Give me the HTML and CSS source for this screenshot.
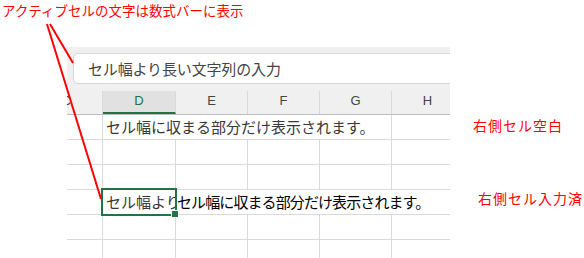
FILE: index.html
```html
<!DOCTYPE html>
<html lang="ja">
<head>
  <meta charset="UTF-8" />
  <meta name="viewport" content="width=device-width, initial-scale=1" />
  <title>セルの文字表示</title>
  <link rel="stylesheet" href="styles.css">
</head>
<body>

  <svg class="callout" width="584" height="258" viewBox="0 0 584 258">
    <line x1="50" y1="24" x2="73" y2="63" />
    <line x1="47" y1="24" x2="101" y2="199" />
  </svg>

  <p class="caption">アクティブセルの文字は数式バーに表示</p>

  <div class="main">
    <div class="sheet">
      <div class="formula-area">
        <div class="formula-box">セル幅より長い文字列の入力</div>
      </div>

      <div class="col-heads">
        <div class="head">C</div>
        <div class="head is-active">D</div>
        <div class="head">E</div>
        <div class="head">F</div>
        <div class="head">G</div>
        <div class="head">H</div>
      </div>

      <div class="rows">
        <!-- row 1: right cells empty, text spills over -->
        <div class="cell"></div>
        <div class="cell span-4">セル幅に収まる部分だけ表示されます。</div>
        <div class="cell"></div>

        <div class="cell"></div><div class="cell"></div><div class="cell"></div>
        <div class="cell"></div><div class="cell"></div><div class="cell"></div>

        <div class="cell"></div><div class="cell"></div><div class="cell"></div>
        <div class="cell"></div><div class="cell"></div><div class="cell"></div>

        <!-- row 4: right cell filled, text clipped -->
        <div class="cell"></div>
        <div class="cell selected"><span class="clip">セル幅より長い文字列の入力</span></div>
        <div class="cell span-rest dark">セル幅に収まる部分だけ表示されます。</div>

        <div class="cell"></div><div class="cell"></div><div class="cell"></div>
        <div class="cell"></div><div class="cell"></div><div class="cell"></div>

        <div class="cell"></div><div class="cell"></div><div class="cell"></div>
        <div class="cell"></div><div class="cell"></div><div class="cell"></div>
      </div>
    </div>

    <div class="notes">
      <p class="note note-empty">右側セル空白</p>
      <p class="note note-filled">右側セル入力済</p>
    </div>
  </div>

</body>
</html>
```

FILE: styles.css
```css
body {
  margin: 0;
  width: 584px;
  height: 258px;
  overflow: hidden;
  position: relative;
  background: #fff;
  font-family: "Noto Sans CJK JP", "Noto Sans", sans-serif;
}
.callout {
  position: absolute;
  left: 0;
  top: 0;
  z-index: 2;
  pointer-events: none;
}
.callout line {
  stroke: #ff0000;
  stroke-width: 2;
}
.caption {
  margin: 0;
  height: 47px;
  padding-left: 2px;
  line-height: 20px;
  font-size: 13.5px;
  color: #ff0000;
}
.main {
  display: flex;
  align-items: flex-start;
}
.sheet {
  margin-left: 67px;
  width: 383px;
  height: 211px;
  overflow: hidden;
}
.formula-area {
  background: #f0f0f0;
  padding: 6px 0 0 6px;
}
.formula-box {
  height: 29px;
  margin-right: -20px;
  padding-left: 14px;
  background: #fff;
  border: 1px solid #d6d6d6;
  border-radius: 5px;
  line-height: 29px;
  font-size: 15px;
  letter-spacing: -0.15px;
  color: #444;
}
.col-heads, .rows {
  display: grid;
  grid-template-columns: 72px 73px 72px 72px 72px 72px;
  margin-left: -36px;
}
.col-heads {
  background: #f0f0f0;
  padding-top: 7px;
  border-bottom: 1px solid #bdbdbd;
}
.head {
  height: 23px;
  box-sizing: border-box;
  border-right: 1px solid #d9d9d9;
  text-align: center;
  line-height: 20px;
  font-family: "Liberation Sans", Arial, sans-serif;
  font-size: 13px;
  color: #444;
}
.head.is-active {
  background: #e1e1e1;
  border-bottom: 2px solid #217346;
  color: #217346;
}
.rows {
  grid-auto-rows: 25px;
}
.cell {
  box-sizing: border-box;
  border-right: 1px solid #dadada;
  border-bottom: 1px solid #dadada;
  padding-left: 3px;
  line-height: 24px;
  font-size: 15px;
  color: #383838;
  white-space: nowrap;
  overflow: hidden;
}
.span-4 {
  grid-column: span 4;
}
.span-rest {
  grid-column: span 4;
  padding-left: 1px;
  letter-spacing: -0.9px;
}
.dark {
  color: #000;
}
.selected {
  position: relative;
  overflow: visible;
  z-index: 1;
}
.clip {
  display: block;
  overflow: hidden;
}
.selected::after {
  content: "";
  position: absolute;
  left: -2px;
  top: -2px;
  right: -2px;
  bottom: -2px;
  border: 2px solid #217346;
}
.selected::before {
  content: "";
  position: absolute;
  right: -4px;
  bottom: -4px;
  width: 6px;
  height: 6px;
  background: #217346;
  border: 1px solid #fff;
  z-index: 1;
}
.notes {
  padding-left: 23px;
}
.note {
  margin: 0;
  line-height: 20px;
  font-size: 14px;
  letter-spacing: 1px;
  color: #ff0000;
}
.note-empty {
  margin-top: 68px;
}
.note-filled {
  margin-top: 53px;
  padding-left: 5px;
}
```
